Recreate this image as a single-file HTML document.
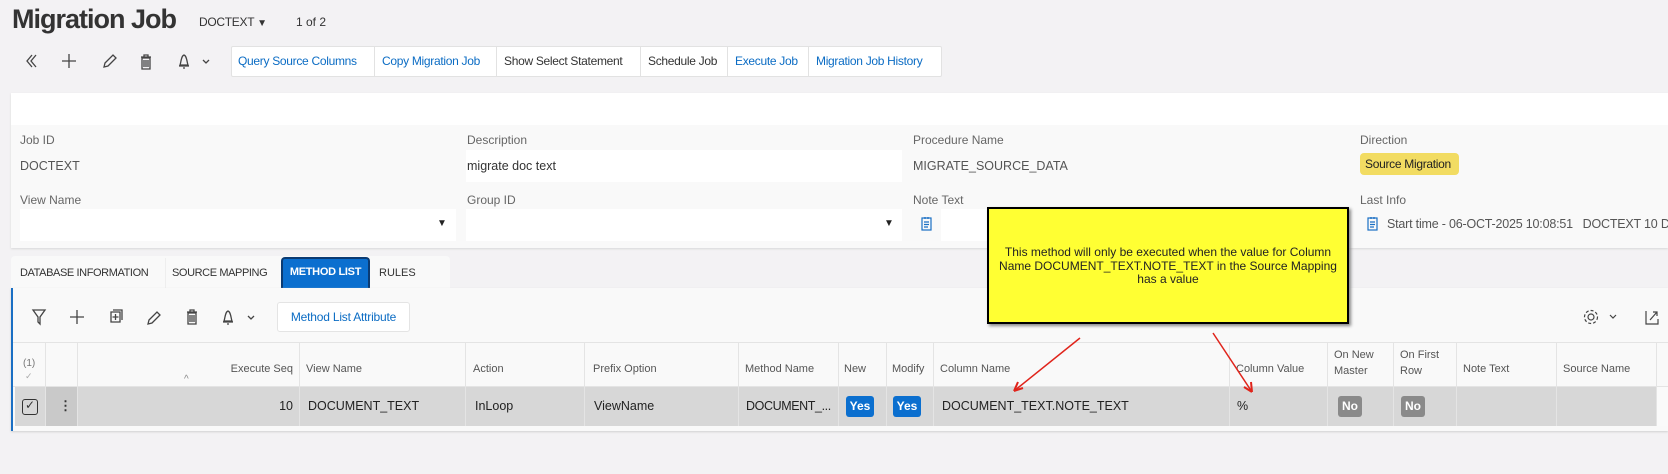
<!DOCTYPE html>
<html><head><meta charset="utf-8"><style>
*{box-sizing:border-box;margin:0;padding:0}
body{width:1668px;height:474px;background:#f3f2f4;font-family:"Liberation Sans",sans-serif;color:#333;position:relative;overflow:hidden;font-size:13px}
.a{position:absolute;white-space:nowrap}
.lbl{color:#666;font-size:12px}
.blue{color:#0b6cc4}
.ic{position:absolute}
.btn{position:absolute;top:46px;height:30px;line-height:30px;font-size:12px;letter-spacing:-0.3px;padding-left:7px;border-right:1px solid #e2e2e2;white-space:nowrap;overflow:hidden}
.th{position:absolute;font-size:11px;color:#555;white-space:nowrap}
.td{position:absolute;top:399px;font-size:12.5px;color:#222;white-space:nowrap}
.vl{position:absolute;top:342px;height:84px;width:1px;background:#e4e4e4}
.badge{position:absolute;top:396px;height:21px;line-height:21px;border-radius:3px;color:#fff;font-weight:bold;font-size:12px;text-align:center}
</style></head><body>
<div class="a" style="left:12px;top:1px;font-size:27px;font-weight:bold;color:#333;letter-spacing:-1px;line-height:36px">Migration Job</div>
<div class="a" style="left:199px;top:15px;font-size:12px;letter-spacing:-0.3px">DOCTEXT <span style="font-size:10px">&#9660;</span></div>
<div class="a" style="left:296px;top:15px;font-size:12px">1 of 2</div>

<svg class="ic" style="left:0;top:45px" width="230" height="32" fill="none" stroke="#444" stroke-width="1.3">
<path d="M32 10l-5 6 5 6M36 10l-5 6 5 6"/>
<path d="M69 9v14M62 16h14"/>
<path d="M104 22l1-4 8-8 3 3-8 8z"/>
<path d="M141 12h10M144 12v-2h4v2M142 13h8v11h-8zM144 15v7M146 15v7M148 15v7"/>
<path d="M180 20c1-2 1-9 4-10 3 1 3 8 4 10zM179 21h10M183 23h2"/>
<path d="M203 15l3 3 3-3"/>
</svg>
<div class="a" style="left:231px;top:46px;width:711px;height:31px;background:#fff;border:1px solid #e2e2e2;border-radius:2px"></div>
<div class="btn blue" style="left:231px;width:144px">Query Source Columns</div>
<div class="btn blue" style="left:375px;width:122px">Copy Migration Job</div>
<div class="btn" style="left:497px;width:144px;color:#333">Show Select Statement</div>
<div class="btn" style="left:641px;width:87px;color:#333">Schedule Job</div>
<div class="btn blue" style="left:728px;width:81px">Execute Job</div>
<div class="btn blue" style="left:809px;width:133px;border:none">Migration Job History</div>

<div class="a" style="left:11px;top:93px;width:1657px;height:155px;background:#f9f9f9;box-shadow:0 1px 2px #d8d8d8"></div>
<div class="a" style="left:11px;top:93px;width:1657px;height:32px;background:#fff"></div>
<div class="a lbl" style="left:20px;top:133px">Job ID</div>
<div class="a" style="left:20px;top:159px;color:#555;font-size:12.5px">DOCTEXT</div>
<div class="a lbl" style="left:467px;top:133px">Description</div>
<div class="a" style="left:466px;top:150px;width:436px;height:32px;background:#fff"></div>
<div class="a" style="left:467px;top:159px;font-size:12.5px">migrate doc text</div>
<div class="a lbl" style="left:913px;top:133px">Procedure Name</div>
<div class="a" style="left:913px;top:159px;color:#555;font-size:12.5px">MIGRATE_SOURCE_DATA</div>
<div class="a lbl" style="left:1360px;top:133px">Direction</div>
<div class="a" style="left:1360px;top:153px;width:99px;height:22px;background:#f2dc62;border-radius:4px;font-size:12px;letter-spacing:-0.3px;line-height:22px;padding-left:5px;color:#222">Source Migration</div>
<div class="a lbl" style="left:20px;top:193px">View Name</div>
<div class="a" style="left:20px;top:209px;width:436px;height:32px;background:#fff"></div>
<div class="a" style="left:437px;top:218px;font-size:10px;color:#222">&#9660;</div>
<div class="a lbl" style="left:467px;top:193px">Group ID</div>
<div class="a" style="left:466px;top:209px;width:436px;height:32px;background:#fff"></div>
<div class="a" style="left:884px;top:218px;font-size:10px;color:#222">&#9660;</div>
<div class="a lbl" style="left:913px;top:193px">Note Text</div>
<div class="a" style="left:941px;top:209px;width:50px;height:32px;background:#fff"></div>
<svg class="ic" style="left:920px;top:216px" width="14" height="16" fill="none" stroke="#1a6fc4" stroke-width="1.2"><rect x="2" y="2" width="9" height="12"/><path d="M4 6h5M4 8.5h5M4 11h4M5 1v2M8 1v2"/></svg>
<div class="a lbl" style="left:1360px;top:193px">Last Info</div>
<svg class="ic" style="left:1366px;top:216px" width="14" height="16" fill="none" stroke="#1a6fc4" stroke-width="1.2"><rect x="2" y="2" width="9" height="12"/><path d="M4 6h5M4 8.5h5M4 11h4M5 1v2M8 1v2"/></svg>
<div class="a" style="left:1387px;top:217px;color:#555;font-size:12.5px;letter-spacing:-0.2px">Start time - 06-OCT-2025 10:08:51&nbsp;&nbsp; DOCTEXT 10 DOC</div>

<div class="a" style="left:11px;top:256px;width:439px;height:32px;background:#f9f9f9;border-radius:4px 4px 0 0"></div>
<div class="a" style="left:165px;top:258px;width:1px;height:30px;background:#eee"></div>
<div class="a" style="left:20px;top:267px;font-size:11px;letter-spacing:-0.4px;color:#333">DATABASE INFORMATION</div>
<div class="a" style="left:172px;top:267px;font-size:11px;letter-spacing:-0.4px;color:#333">SOURCE MAPPING</div>
<div class="a" style="left:281px;top:257px;width:89px;height:31px;background:#0b6fcf;border:2px solid #0b3b73;border-bottom:none;border-radius:4px 4px 0 0;color:#fff;font-size:11px;letter-spacing:-0.3px;font-weight:bold;line-height:27px;text-align:center">METHOD LIST</div>
<div class="a" style="left:379px;top:267px;font-size:11px;color:#333">RULES</div>

<div class="a" style="left:11px;top:288px;width:1657px;height:143px;background:#f9f9f9;border-left:2px solid #1a6fc4;box-shadow:0 1px 2px #d0d0d0"></div>
<svg class="ic" style="left:25px;top:302px" width="250" height="30" fill="none" stroke="#444" stroke-width="1.3">
<path d="M8 8h12l-5 7v7l-2-2v-5z"/>
<path d="M52 8v14M45 15h14"/>
<path d="M86 10h9v10h-9zM88 8h9v10M90.5 12v6M87.5 15h6"/>
<path d="M123 22l1-4 8-8 3 3-8 8z"/>
<path d="M162 10h10M165 10v-2h4v2M163 11h8v11h-8zM165 13v7M167 13v7M169 13v7"/>
<path d="M199 19c1-2 1-9 4-10 3 1 3 8 4 10zM198 20h10M202 22h2"/>
<path d="M223 14l3 3 3-3"/>
</svg>
<div class="a" style="left:277px;top:302px;width:133px;height:30px;background:#fff;border:1px solid #e4e4e4;border-radius:3px;line-height:28px;text-align:center;font-size:12px;letter-spacing:-0.2px"><span class="blue">Method List Attribute</span></div>
<svg class="ic" style="left:1580px;top:306px" width="85" height="22" fill="none" stroke="#444" stroke-width="1.2">
<circle cx="11" cy="11" r="3"/><circle cx="11" cy="11" r="6.5" stroke-dasharray="3 2"/>
<path d="M30 9l3 3 3-3"/>
<path d="M66 5v13h12v-5M70 14l7-8M73 6h4v4"/>
</svg>

<div class="a" style="left:13px;top:342px;width:1655px;height:84px;background:#f9f9f9;border-top:1px solid #e4e4e4"></div>
<div class="a" style="left:15px;top:387px;width:1641px;height:39px;background:#d7d7d7"></div>
<div class="a" style="left:46px;top:387px;width:32px;height:39px;background:#c9c9c9"></div>
<div class="a" style="left:1656px;top:387px;width:12px;height:39px;background:#fafafa"></div>
<div class="vl" style="left:45px"></div><div class="vl" style="left:77px"></div><div class="vl" style="left:299px"></div><div class="vl" style="left:465px"></div><div class="vl" style="left:584px"></div><div class="vl" style="left:738px"></div><div class="vl" style="left:838px"></div><div class="vl" style="left:886px"></div><div class="vl" style="left:933px"></div><div class="vl" style="left:1229px"></div><div class="vl" style="left:1327px"></div><div class="vl" style="left:1393px"></div><div class="vl" style="left:1456px"></div><div class="vl" style="left:1556px"></div><div class="vl" style="left:1656px"></div>
<div class="a" style="left:13px;top:386px;width:1655px;height:1px;background:#e4e4e4"></div>

<div class="th" style="left:23px;top:358px;font-size:10px;color:#777">(1)</div>
<div class="th" style="left:25px;top:371px;font-size:9px;color:#aaa">&#10003;</div>
<div class="th" style="left:184px;top:374px;font-size:10px;color:#888">^</div>
<div class="th" style="left:200px;top:363px;width:93px;text-align:right">Execute Seq</div>
<div class="th" style="left:306px;top:363px">View Name</div>
<div class="th" style="left:473px;top:363px">Action</div>
<div class="th" style="left:593px;top:363px">Prefix Option</div>
<div class="th" style="left:745px;top:363px">Method Name</div>
<div class="th" style="left:844px;top:363px">New</div>
<div class="th" style="left:892px;top:363px">Modify</div>
<div class="th" style="left:940px;top:363px">Column Name</div>
<div class="th" style="left:1236px;top:363px">Column Value</div>
<div class="th" style="left:1334px;top:347px;line-height:16px">On New<br>Master</div>
<div class="th" style="left:1400px;top:347px;line-height:16px">On First<br>Row</div>
<div class="th" style="left:1463px;top:363px">Note Text</div>
<div class="th" style="left:1563px;top:363px">Source Name</div>

<div class="a" style="left:22px;top:399px;width:16px;height:16px;border:1.3px solid #333;border-radius:3px"></div>
<div class="a" style="left:25px;top:398px;font-size:12px;color:#333">&#10003;</div>
<div class="a" style="left:59px;top:398px;font-weight:bold">&#8942;</div>
<div class="td" style="left:250px;width:43px;text-align:right">10</div>
<div class="td" style="left:308px">DOCUMENT_TEXT</div>
<div class="td" style="left:475px">InLoop</div>
<div class="td" style="left:594px">ViewName</div>
<div class="td" style="left:746px;letter-spacing:-0.4px">DOCUMENT_...</div>
<div class="badge" style="left:846px;width:28px;background:#0b6fcf">Yes</div>
<div class="badge" style="left:893px;width:28px;background:#0b6fcf">Yes</div>
<div class="td" style="left:942px">DOCUMENT_TEXT.NOTE_TEXT</div>
<div class="td" style="left:1237px">%</div>
<div class="badge" style="left:1338px;width:24px;background:#8a8a8a">No</div>
<div class="badge" style="left:1401px;width:24px;background:#8a8a8a">No</div>

<div class="a" style="left:987px;top:207px;width:362px;height:117px;background:#ffff33;border:2px solid #000;box-shadow:2px 2px 3px #888;white-space:normal;text-align:center;font-size:12px;line-height:13.5px;color:#222;padding:37px 8px 0">This method will only be executed when the value for Column Name DOCUMENT_TEXT.NOTE_TEXT in the Source Mapping has a value</div>
<svg class="ic" style="left:0;top:0" width="1668" height="474" fill="none" stroke="#e0241b" stroke-width="1.5">
<path d="M1080 338L1014 391"/><path d="M1014 391l4-9M1014 391l9-3" stroke-width="2"/>
<path d="M1213 333L1252 392"/><path d="M1252 392l-1-10M1252 392l-8-5" stroke-width="2"/>
</svg>
</body></html>
